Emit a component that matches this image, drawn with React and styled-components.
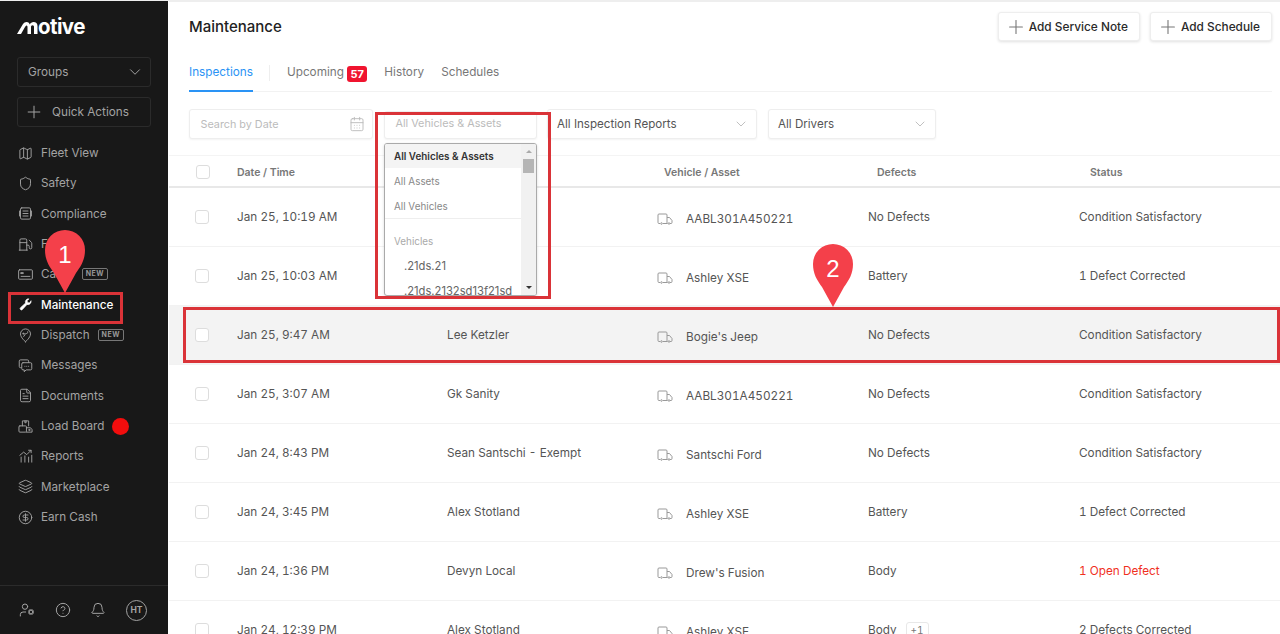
import React from "react";
import styled, { createGlobalStyle } from "styled-components";
import { Map, Shield, Fuel, FileText, Layers, CircleDollarSign, CircleHelp, Bell, UserCog, Plus, ChevronDown, CalendarDays } from "lucide-react";

const Global = createGlobalStyle`
  html, body { margin: 0; padding: 0; height: 634px; overflow: hidden; background: #fff; }
  body { font-family: Inter, "Liberation Sans", sans-serif; color: #4a4a4a; }
  * { box-sizing: border-box; }
`;
const Page = styled.div`position: relative; display: flex; width: 1280px; height: 634px; overflow: hidden; border-top: 1px solid #eee;`;
const Sidebar = styled.aside`
  width: 168px; flex: none; background: #181818; display: flex; flex-direction: column; padding: 15px 0 0;
`;
const Logo = styled.div`
  display: flex; align-items: baseline; height: 22px; padding-left: 17px; margin-bottom: 19px; color: #fff;
  font-size: 20.5px; font-weight: 700; letter-spacing: -0.6px; line-height: 22px;
`;
const SideControl = styled.div`
  margin: 0 17px 10px; height: 30px; flex: none; border: 1px solid #2b2b2b; border-radius: 3px; display: flex; align-items: center;
  padding: 0 ${p => p.$between ? 6 : 10}px 0 10px; color: #a3a3a3; font-size: 11.75px; justify-content: ${p => p.$between ? "space-between" : "flex-start"};
  gap: 8px;
`;
const PlusMark = styled(Plus)`margin-left: -4px; flex: none;`;
const NavList = styled.nav`display: flex; flex-direction: column; margin-top: 1px;`;
const NavItem = styled.div`
  height: 30.33px; display: flex; align-items: center; padding-left: 18px; gap: 8px; font-size: 11.7px;
  color: ${p => p.$active ? "#fff" : "#a3a3a3"}; font-weight: ${p => p.$active ? 500 : 400};
  svg { flex: none; width: 15px; height: 15px; }
`;
const NewBadge = styled.span`
  font-size: 7px; font-weight: 700; letter-spacing: .5px; border: 1px solid #777; color: #999; border-radius: 2px;
  padding: 1px 3px; line-height: 8px;
`;
const Dot = styled.span`width: 17px; height: 17px; border-radius: 50%; background: #f20d0d;`;
const SideFooter = styled.div`
  margin-top: auto; height: 49px; flex: none; border-top: 1px solid #2b2b2b; display: flex; align-items: center;
  padding: 0 21px 0 19px; justify-content: space-between; color: #a3a3a3;
  svg { width: 16px; height: 16px; }
`;
const Avatar = styled.span`
  width: 21px; height: 21px; border-radius: 50%; border: 1px solid #a3a3a3; font-size: 8.5px; font-weight: 700;
  display: flex; align-items: center; justify-content: center;
`;
const Main = styled.main`flex: 1; min-width: 0; margin-left: 1px; display: flex; flex-direction: column; border-top: 1px solid #eee;`;
const Head = styled.header`
  height: 90px; flex: none; margin: 0 8px 0 20px; border-bottom: 1px solid #f2f2f2; display: flex; flex-direction: column;
`;
const TitleRow = styled.div`display: flex; justify-content: space-between; padding-top: 10px; height: 56px; flex: none;`;
const Title = styled.h1`margin: 0; font-size: 15px; font-weight: 500; color: #222; line-height: 30px;`;
const Actions = styled.div`display: flex; gap: 10px;`;
const ActionButton = styled.button`
  height: 29px; font: 500 11.85px Inter, sans-serif; color: #2a2a2a; background: #fff; border: 1px solid #eee; border-radius: 3px;
  box-shadow: 0 1px 3px rgba(0,0,0,.12); display: flex; align-items: center; padding: 0 11px 0 6px; gap: 2px;
  svg { width: 22px; height: 22px; color: #777; stroke-width: 1.2; }
`;
const Tabs = styled.div`display: flex; align-items: flex-start; font-size: 11.75px; color: #777;`;
const Tab = styled.div`
  height: 34px; padding-top: 7px; line-height: 15px; display: flex; align-items: flex-start; margin-right: ${p => p.$mr ?? 17}px;
  color: ${p => p.$active ? "#2a93f5" : "#777"};
  border-bottom: ${p => p.$active ? "2px solid #2a93f5" : "none"};
`;
const TabDivider = styled.span`width: 1px; height: 16px; margin: 7px 17px 0 16px; background: #eee;`;
const Count = styled.span`
  background: #f0142f; color: #fff; font-size: 11px; font-weight: 700; border-radius: 3px; padding: 0 3.5px; height: 16px; line-height: 16px; margin: 1px 0 0 3px;
`;
const Filters = styled.div`display: flex; gap: 11px; padding: 17px 0 0 20px; height: 64px; flex: none; border-bottom: 1px solid #f4f4f4; align-items: flex-start;`;
const FilterBox = styled.div`
  position: relative; width: ${p => p.$w}px; height: ${p => p.$short ? 28 : 30}px; margin-top: ${p => p.$short ? 2 : 0}px; margin-right: ${p => p.$short ? -1 : 0}px;
  border: 1px solid #eee; border-radius: 3px; background: #fff; box-shadow: 0 1px 2px rgba(0,0,0,.05);
  display: flex; align-items: center; justify-content: space-between; padding: 0 7px ${p => p.$short ? 3 : 0}px ${p => p.$muted ? 10.5 : 9}px;
  font-size: ${p => p.$muted ? 10.8 : 11.6}px; color: ${p => p.$muted ? "#bbb" : "#555"};
  svg { width: 16px; height: 16px; color: #bbb; stroke-width: 1.4; }
`;
const Menu = styled.div`
  position: absolute; left: -1px; top: 31px; width: 153px; height: 153px; background: #fff; border: 1px solid #aaa; border-radius: 3px;
  overflow: hidden; display: flex; z-index: 3; box-shadow: 0 1px 3px rgba(0,0,0,.15);
`;
const MenuList = styled.div`flex: 1; min-width: 0; margin-top: -1px;`;
const MenuItem = styled.div`
  height: 25px; display: flex; align-items: center; padding-left: ${p => p.$indent ? 19 : 9}px; white-space: nowrap; overflow: hidden;
  background: ${p => p.$active ? "#f4f4f4" : "transparent"}; color: ${p => p.$active ? "#333" : p.$dark ? "#666" : "#888"};
  font-weight: ${p => p.$active ? 600 : 400}; font-size: ${p => p.$dark ? 11.2 : 9.9}px;
`;
const MenuRule = styled.div`height: 1px; background: #eee; margin: 0 0 9px;`;
const MenuLabel = styled(MenuItem)`color: #aaa;`;
const ScrollTrack = styled.div`
  width: 15px; flex: none; background: #f1f1f1; position: relative; display: flex; flex-direction: column; align-items: center;
  justify-content: space-between; padding: 6px 0;
`;
const Thumb = styled.div`position: absolute; top: 15px; left: 2px; width: 11px; height: 14px; background: #b5b5b5;`;
const Arrow = styled.div`
  width: 0; height: 0; border-left: 3px solid transparent; border-right: 3px solid transparent;
  ${p => p.$up ? "border-bottom: 3px solid #aaa;" : "border-top: 3px solid #333;"}
`;
const TableHead = styled.div`
  display: grid; grid-template-columns: 68px 210px 217px 213px 213px 1fr; align-items: center; height: 32px; flex: none; padding-top: 2px; border-bottom: 2px solid #e8e8e8;
  font-size: 10.5px; font-weight: 600; color: #777;
`;
const Check = styled.span`
  width: 14px; height: 14px; border: 1px solid #ddd; border-radius: 3px; background: #fff; display: block; margin-left: ${p => p.$head ? 27 : 26}px;
`;
const Row = styled.div`
  display: grid; grid-template-columns: 68px 210px 210px 211px 211px 1fr; align-items: center; height: 59px; flex: none;
  border-bottom: 1px solid #f2f2f2; font-size: 11.75px; font-variant-numeric: tabular-nums; color: #555; background: ${p => p.$hl ? "#f3f3f3" : "#fff"};
`;
const VehicleCell = styled.div`display: flex; align-items: center; gap: 13px; padding-top: 4px;
  svg { flex: none; width: 16px; height: 12px; }`;
const DefectCell = styled.div`display: flex; align-items: center; gap: 9px;`;
const Plus1 = styled.span`font-size: 10px; border: 1px solid #e8e8e8; border-radius: 3px; padding: 1px 4px; color: #777;`;
const Status = styled.div`color: ${p => p.$open ? "#f0301e" : "#555"};`;
const Highlight = styled.div`position: absolute; border: 3px solid #da3338; pointer-events: none; z-index: 5;
  left: ${p => p.$l}px; top: ${p => p.$t}px; width: ${p => p.$w}px; height: ${p => p.$h}px;`;
const PinWrap = styled.div`position: absolute; left: ${p => p.$l}px; top: ${p => p.$t}px; width: 40px; height: 63px; z-index: 6;
  svg { display: block; }`;
const PinNumber = styled.span`position: absolute; left: 0; right: 0; top: 10px; text-align: center; color: #fff; font: 400 24px "Liberation Sans", sans-serif; line-height: 30px;`;

const Ico = ({ children, fill = "none", w = 1.5 }) => (
  <svg viewBox="0 0 24 24" fill={fill} stroke="currentColor" strokeWidth={w} strokeLinecap="round" strokeLinejoin="round">{children}</svg>
);
const ComplianceIcon = () => <Ico><rect x="4" y="3" width="16" height="18" rx="2" /><path d="M8 8h8M8 12h8M8 16h8M2.500 8v8M21.500 8v8" /></Ico>;
const CardIcon = () => <Ico><rect x="1" y="4.500" width="22" height="15" rx="1.500" /><path d="M5 9h3.500v1.500H5zM5 15h14" /></Ico>;
const WrenchIcon = () => <Ico fill="currentColor" w={1}><path d="M21 6.500a5 5 0 0 1-6.600 5.400L7 20a2 2 0 0 1-3-.1 2 2 0 0 1 0-2.900l8.100-7.300A5 5 0 0 1 17.500 3L14.500 6l.8 2.700 2.700.8z" /></Ico>;
const DispatchIcon = () => <Ico><path d="M12 22s8-6.500 8-12.500a8 8 0 0 0-16 0C4 15.500 12 22 12 22z" /><path d="M9 13.500c2.500 0 1-4 3.500-4.500s3 0 3-3" /><circle cx="8.500" cy="9" r="1" /></Ico>;
const MessagesIcon = () => <Ico><path d="M5 15.500H4a2 2 0 0 1-2-2V5a2 2 0 0 1 2-2h11a2 2 0 0 1 2 2v2" /><path d="M8 7.500h12a2 2 0 0 1 2 2V17a2 2 0 0 1-2 2h-7l-3 3v-3H8a2 2 0 0 1-2-2V9.500a2 2 0 0 1 2-2z" /><path d="M11 13.300h.1M14 13.300h.1M17 13.300h.1" /></Ico>;
const LoadIcon = () => <Ico><path d="M7 11V3h10v8M11 3v3h2V3" /><rect x="1.500" y="11" width="12" height="10" rx="1.500" /><path d="M13.500 14H20l2.500 3v4h-9" /><circle cx="18" cy="17.500" r="1" /></Ico>;
const ReportsIcon = () => <Ico><path d="M5 21v-8M11 21v-10M17 21v-8M22 21v-11M3 10l6-5 5 4 7-7M17 2h4v4" /></Ico>;
const Truck = () => (
  <svg viewBox="0 0 16 12" fill="none" stroke="#999" strokeWidth="1">
    <path d="M10 10.500V2a1 1 0 0 0-1-1H2a1 1 0 0 0-1 1v7.500a1 1 0 0 0 1 1h1" />
    <path d="M6 10.500h4.500M10 4.500h2.500l2.500 3v2a1 1 0 0 1-1 1h-1" />
    <circle cx="4.500" cy="10.500" r=".8" /><circle cx="12" cy="10.500" r=".8" />
  </svg>
);
const Pin = ({ l, t, n }) => (
  <PinWrap $l={l} $t={t}>
    <svg width="40" height="63" viewBox="0 0 40 63"><path d="M20 0a20 20 0 0 1 20 20c0 10-4 16-9 23L20 63 9 43C4 36 0 30 0 20A20 20 0 0 1 20 0z" fill="#f4404a" /></svg>
    <PinNumber>{n}</PinNumber>
  </PinWrap>
);
const nav = [
  [<Map strokeWidth={1.5} />, "Fleet View"], [<Shield strokeWidth={1.5} />, "Safety"], [<ComplianceIcon />, "Compliance"], [<Fuel strokeWidth={1.5} />, "Fuel"],
  [<CardIcon />, "Cards", "new"], [<WrenchIcon />, "Maintenance", "active"], [<DispatchIcon />, "Dispatch", "new"],
  [<MessagesIcon />, "Messages"], [<FileText strokeWidth={1.5} />, "Documents"], [<LoadIcon />, "Load Board", "dot"],
  [<ReportsIcon />, "Reports"], [<Layers strokeWidth={1.5} />, "Marketplace"], [<CircleDollarSign strokeWidth={1.5} />, "Earn Cash"],
];
const rows = [
  ["Jan 25, 10:19 AM", "Lee Ketzler", "AABL301A450221", "No Defects", "Condition Satisfactory"],
  ["Jan 25, 10:03 AM", "Alex Stotland", "Ashley XSE", "Battery", "1 Defect Corrected"],
  ["Jan 25, 9:47 AM", "Lee Ketzler", "Bogie's Jeep", "No Defects", "Condition Satisfactory"],
  ["Jan 25, 3:07 AM", "Gk Sanity", "AABL301A450221", "No Defects", "Condition Satisfactory"],
  ["Jan 24, 8:43 PM", "Sean Santschi - Exempt", "Santschi Ford", "No Defects", "Condition Satisfactory"],
  ["Jan 24, 3:45 PM", "Alex Stotland", "Ashley XSE", "Battery", "1 Defect Corrected"],
  ["Jan 24, 1:36 PM", "Devyn Local", "Drew's Fusion", "Body", "1 Open Defect"],
  ["Jan 24, 12:39 PM", "Alex Stotland", "Ashley XSE", "Body", "2 Defects Corrected"],
];

export default function App() {
  return (
    <Page>
      <Global />
      <Sidebar>
        <Logo>
          <svg width="21" height="12" viewBox="0 0 21 12"><path d="M0 12 6 2C7 .7 8 0 9.500 0c2 0 3 1 3 2.500C13.500 1 15 0 16.500 0 19 0 20.500 1.500 20.500 4v8H17V5c0-1-.5-1.800-1.500-1.800S14 4 14 5v7h-3.500V5c0-1-.5-1.500-1-1.500S8.500 4 8 5L4 12z" fill="#fff" /></svg>
          otive
        </Logo>
        <SideControl $between>Groups <ChevronDown size={18} strokeWidth={1.3} /></SideControl>
        <SideControl><PlusMark size={20} strokeWidth={1.2} /> Quick Actions</SideControl>
        <NavList>
          {nav.map(([icon, label, kind]) => (
            <NavItem key={label} $active={kind === "active"}>
              {icon}
              {label}
              {kind === "new" && <NewBadge>NEW</NewBadge>}
              {kind === "dot" && <Dot />}
            </NavItem>
          ))}
        </NavList>
        <SideFooter>
          <UserCog strokeWidth={1.5} /><CircleHelp strokeWidth={1.5} /><Bell strokeWidth={1.5} /><Avatar>HT</Avatar>
        </SideFooter>
      </Sidebar>
      <Main>
        <Head>
          <TitleRow>
            <Title>Maintenance</Title>
            <Actions>
              <ActionButton><Plus /> Add Service Note</ActionButton>
              <ActionButton><Plus /> Add Schedule</ActionButton>
            </Actions>
          </TitleRow>
          <Tabs>
            <Tab $active $mr={0}>Inspections</Tab>
            <TabDivider />
            <Tab>Upcoming <Count>57</Count></Tab>
            <Tab>History</Tab>
            <Tab>Schedules</Tab>
          </Tabs>
        </Head>
        <Filters>
          <FilterBox $w={184} $muted>Search by Date <CalendarDays /></FilterBox>
          <FilterBox $w={153} $muted $short>
            All Vehicles &amp; Assets
            <Menu>
              <MenuList>
                <MenuItem $active>All Vehicles &amp; Assets</MenuItem>
                <MenuItem>All Assets</MenuItem>
                <MenuItem>All Vehicles</MenuItem>
                <MenuRule />
                <MenuLabel>Vehicles</MenuLabel>
                <MenuItem $indent $dark>.21ds.21</MenuItem>
                <MenuItem $indent $dark>.21ds.2132sd13f21sd</MenuItem>
              </MenuList>
              <ScrollTrack><Arrow $up /><Thumb /><Arrow /></ScrollTrack>
            </Menu>
          </FilterBox>
          <FilterBox $w={210}>All Inspection Reports <ChevronDown /></FilterBox>
          <FilterBox $w={168}>All Drivers <ChevronDown /></FilterBox>
        </Filters>
        <TableHead>
          <Check $head />
          <div>Date / Time</div>
          <div>Driver</div>
          <div>Vehicle / Asset</div>
          <div>Defects</div>
          <div>Status</div>
        </TableHead>
        {rows.map((r, i) => (
          <Row key={i} $hl={i === 2}>
            <Check />
            <div>{r[0]}</div>
            <div>{r[1]}</div>
            <VehicleCell><Truck />{r[2]}</VehicleCell>
            <DefectCell>{r[3]}{i === 7 && <Plus1>+1</Plus1>}</DefectCell>
            <Status $open={r[4] === "1 Open Defect"}>{r[4]}</Status>
          </Row>
        ))}
      </Main>
      <Highlight $l={8} $t={291} $w={115} $h={32} />
      <Highlight $l={375} $t={111} $w={176} $h={187} />
      <Highlight $l={183} $t={306} $w={1097} $h={56} />
      <Pin l={45} t={229} n="1" />
      <Pin l={813} t={243} n="2" />
    </Page>
  );
}
